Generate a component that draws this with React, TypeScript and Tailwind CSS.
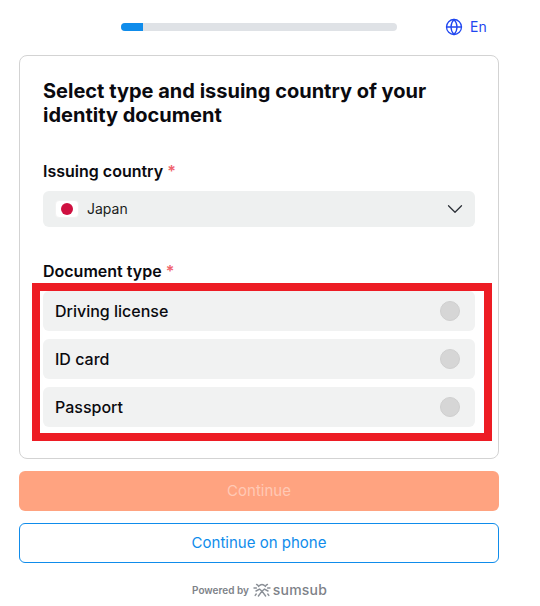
import { ChevronDown, Globe } from 'lucide-react'

const documentTypes = ['Driving license', 'ID card', 'Passport']

function Label({ text }: { text: string }) {
  return (
    <p className="text-base leading-6 font-semibold text-[#0a0a0f]">
      {text} <span className="text-[#f0646e]">*</span>
    </p>
  )
}

function SumsubMark() {
  return (
    <svg width="18" height="14" viewBox="0 0 18 14" fill="none" stroke="#8a8f96" strokeWidth="1.4" strokeLinecap="round">
      <path d="M5.6 3.4 Q9 -0.4 12.4 3.4 M3.6 1.4 L5 2.4 M14.4 1.4 L13 2.4 M1 5 L3.4 5 M17 5 L14.6 5 M3 8 L6.6 6.2 L9 8.2 L11.4 6.2 L15 8 M9 8.2 L5.4 13 M9 8.2 L12.6 13 M3.2 11 L2.2 12.4 M14.8 11 L15.8 12.4" />
    </svg>
  )
}

export default function App() {
  return (
    <div className="relative w-[540px] h-[606px] bg-white overflow-hidden font-['Inter',sans-serif]">
      <header className="h-[55px] flex items-start pt-[23px] pl-[121px]">
        <div className="w-[276px] h-2 rounded-full bg-[#dfe2e6] overflow-hidden">
          <div className="w-[22px] h-2 bg-[#0f8ceb]" />
        </div>
        <div className="ml-[48px] -mt-[5px] flex items-center gap-[7px] text-sm leading-[18px] text-[#1f46f0]">
          <Globe size={18} strokeWidth={1.7} />
          <span>En</span>
        </div>
      </header>

      <main className="mx-[19px] w-[480px] h-[404px] rounded-lg border border-[#d3d3d3] px-[23px] pt-[23px]">
        <h1 className="text-xl leading-6 font-bold text-[#0a0a0f]">
          Select type and issuing country of your identity document
        </h1>

        <div className="mt-[32px]">
          <Label text="Issuing country" />
          <div className="mt-2 h-9 rounded-md bg-[#eef0f0] flex items-center px-3">
            <div className="w-6 h-[18px] bg-white rounded-sm border border-[#f2f2f2] flex items-center justify-center">
              <div className="w-3 h-3 rounded-full bg-[#cf1040]" />
            </div>
            <span className="ml-2 text-sm text-[#1a1c20]">Japan</span>
            <ChevronDown size={26} strokeWidth={1.15} className="ml-auto -mr-[5px] text-[#2a2f36]" />
          </div>
        </div>

        <div className="mt-[32px]">
          <Label text="Document type" />
          <div className="mt-2 flex flex-col gap-2">
            {documentTypes.map(name => (
              <div key={name} className="h-10 rounded-md bg-[#f1f2f2] flex items-center justify-between pl-3 pr-[15px]">
                <span className="text-base font-medium text-[#0a0a0f]">{name}</span>
                <span className="w-5 h-5 rounded-full bg-[#d6d6d6] border border-[#cfcfcf]" />
              </div>
            ))}
          </div>
        </div>
      </main>

      <div className="mx-[19px] w-[480px] mt-3 flex flex-col gap-3">
        <button className="h-10 rounded-md bg-[#ffa380] text-[15px] text-[#ffc9b5]">Continue</button>
        <button className="h-10 rounded-md border border-[#0f8ceb] bg-white text-[15px] text-[#0f8ceb]">Continue on phone</button>
      </div>

      <footer className="mt-[19px] pl-[192px] flex items-center gap-[4px]">
        <span className="text-[10px] leading-3 font-semibold text-[#7d8288]">Powered by</span>
        <SumsubMark />
        <span className="ml-[-2px] text-[14px] leading-4 font-medium tracking-[0.2px] text-[#7d8288]">sumsub</span>
      </footer>

      {/* annotation box drawn over the screenshot */}
      <div className="absolute left-[32px] top-[283px] w-[460px] h-[158px] border-[8px] border-[#ed1c24] pointer-events-none" />
    </div>
  )
}
